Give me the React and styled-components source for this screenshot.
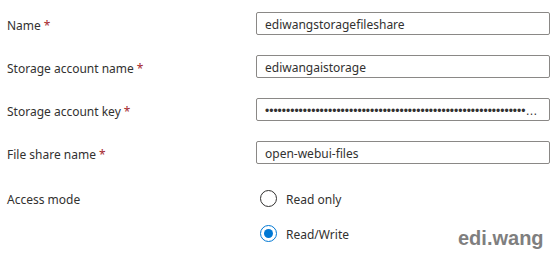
import React from "react";
import styled, { createGlobalStyle } from "styled-components";

const GlobalStyle = createGlobalStyle`
  body {
    margin: 0;
    background: #ffffff;
    font-family: "Noto Sans", "Liberation Sans", sans-serif;
    color: #323130;
  }
`;

const Page = styled.div`
  position: relative;
  width: 556px;
  height: 261px;
  overflow: hidden;
  background: #ffffff;
`;

const Form = styled.div`
  display: flex;
  flex-direction: column;
  gap: 20px;
  padding: 12px 0 0 7px;
`;

const Row = styled.div`
  display: grid;
  grid-template-columns: 249px 294px;
  align-items: baseline;
  margin-top: ${(props) => props.offset || 0}px;
`;

const Label = styled.div`
  font-size: 12px;
  color: #323130;
  position: relative;
  top: 1px;
`;

const Required = styled.span`
  color: #a4262c;
  margin-left: 3px;
`;

const TextBox = styled.div`
  box-sizing: border-box;
  height: 23px;
  border: 1px solid #8a8886;
  border-radius: 2px;
  padding: 3px 8px 0;
  font-size: 12px;
  line-height: 18px;
  color: #323130;
  white-space: nowrap;
  overflow: hidden;
  text-overflow: ellipsis;
  font-family: ${(props) =>
    props.secret ? '"Liberation Sans", sans-serif' : "inherit"};
`;

const Options = styled.div`
  display: flex;
  flex-direction: column;
  gap: 18px;
  padding-left: 4px;
`;

const Option = styled.label`
  display: flex;
  align-items: center;
  gap: 9px;
  font-size: 12px;
  color: #323130;
  line-height: 17px;
`;

const OptionText = styled.span`
  position: relative;
  top: 1px;
`;

const Circle = styled.span`
  box-sizing: border-box;
  width: 17px;
  height: 17px;
  border-radius: 50%;
  border: 1px solid ${(props) => (props.checked ? "#0078d4" : "#323130")};
  display: flex;
  align-items: center;
  justify-content: center;

  &::after {
    content: "";
    width: 9px;
    height: 9px;
    border-radius: 50%;
    background: ${(props) => (props.checked ? "#0078d4" : "transparent")};
  }
`;

const Watermark = styled.div`
  position: absolute;
  left: 458px;
  top: 227px;
  font-family: "Liberation Sans", Arial, sans-serif;
  font-weight: bold;
  font-size: 20px;
  color: #7f7f7f;
`;

const fields = [
  { label: "Name", value: "ediwangstoragefileshare" },
  { label: "Storage account name", value: "ediwangaistorage" },
  { label: "Storage account key", value: "•".repeat(90), secret: true },
  { label: "File share name", value: "open-webui-files" },
];

const modes = [
  { name: "Read only", checked: false },
  { name: "Read/Write", checked: true },
];

export default function App() {
  return (
    <Page>
      <GlobalStyle />
      <Form>
        {fields.map((f) => (
          <Row key={f.label}>
            <Label>
              {f.label}
              <Required>*</Required>
            </Label>
            <TextBox secret={f.secret}>{f.value}</TextBox>
          </Row>
        ))}
        <Row offset={6}>
          <Label>Access mode</Label>
          <Options>
            {modes.map((m) => (
              <Option key={m.name}>
                <Circle checked={m.checked} />
                <OptionText>{m.name}</OptionText>
              </Option>
            ))}
          </Options>
        </Row>
      </Form>
      <Watermark>edi.wang</Watermark>
    </Page>
  );
}
